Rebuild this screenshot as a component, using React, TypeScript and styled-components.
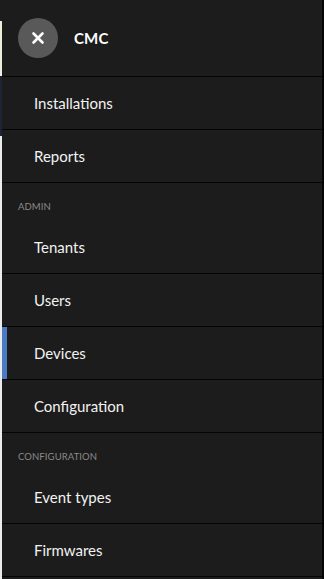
import React from "react";
import styled, { createGlobalStyle } from "styled-components";

const Global = createGlobalStyle`
  html, body { margin: 0; padding: 0; background: #ececec; }
  body { font-family: Lato, "Noto Sans", sans-serif; overflow: hidden; }
`;

const Page = styled.div`
  display: flex;
  width: 324px;
  height: 579px;
  overflow: hidden;
`;

const Backdrop = styled.div`
  width: 2px;
  display: flex;
  flex-direction: column;
  flex-shrink: 0;
`;

const Strip = styled.div<{ $h: number; $c: string }>`
  height: ${(p) => p.$h}px;
  background: ${(p) => p.$c};
  flex-shrink: 0;
`;

const Drawer = styled.nav`
  width: 320px;
  flex-shrink: 0;
  background: #1c1c1c;
  border-right: 2px solid #050505;
  display: flex;
  flex-direction: column;
`;

const Header = styled.div`
  height: 76px;
  display: flex;
  align-items: center;
  padding-left: 16px;
  gap: 16px;
  border-bottom: 1px solid #050505;
  flex-shrink: 0;
`;

const CloseButton = styled.button`
  width: 40px;
  height: 40px;
  border-radius: 50%;
  border: none;
  background: #595959;
  display: flex;
  align-items: center;
  justify-content: center;
  padding: 0;
`;

const Title = styled.div`
  color: #ffffff;
  font-weight: 700;
  font-size: 15px;
  letter-spacing: 0.2px;
`;

const Item = styled.div<{ $active?: boolean }>`
  height: 52px;
  display: flex;
  align-items: center;
  padding-left: 32px;
  color: #f2f2f2;
  font-size: 15px;
  border-bottom: 1px solid #050505;
  box-shadow: ${(p) => (p.$active ? "inset 5px 0 0 #4a7bc4" : "none")};
  flex-shrink: 0;
`;

const Section = styled.div`
  height: 38px;
  box-sizing: border-box;
  padding: 18px 0 0 16px;
  line-height: 12px;
  color: #8a8a8a;
  font-size: 9.5px;
  letter-spacing: 0.1px;
  text-transform: uppercase;
  flex-shrink: 0;
`;

const CloseIcon = () => (
  <svg width="14" height="14" viewBox="0 0 14 14">
    <path d="M2.5 2.5 L11.5 11.5 M11.5 2.5 L2.5 11.5" stroke="#fff" strokeWidth="2.6" strokeLinecap="round" />
  </svg>
);

export default function App() {
  return (
    <Page>
      <Global />
      <Backdrop>
        <Strip $h={21} $c="#1c1c1c" />
        <Strip $h={52} $c="#efeedb" />
        <Strip $h={3} $c="#ececec" />
        <Strip $h={60} $c="#1b2535" />
        <Strip $h={443} $c="#ececec" />
      </Backdrop>
      <Drawer>
        <Header>
          <CloseButton aria-label="close">
            <CloseIcon />
          </CloseButton>
          <Title>CMC</Title>
        </Header>
        <Item>Installations</Item>
        <Item>Reports</Item>
        <Section>Admin</Section>
        <Item>Tenants</Item>
        <Item>Users</Item>
        <Item $active>Devices</Item>
        <Item>Configuration</Item>
        <Section>Configuration</Section>
        <Item>Event types</Item>
        <Item>Firmwares</Item>
      </Drawer>
    </Page>
  );
}
